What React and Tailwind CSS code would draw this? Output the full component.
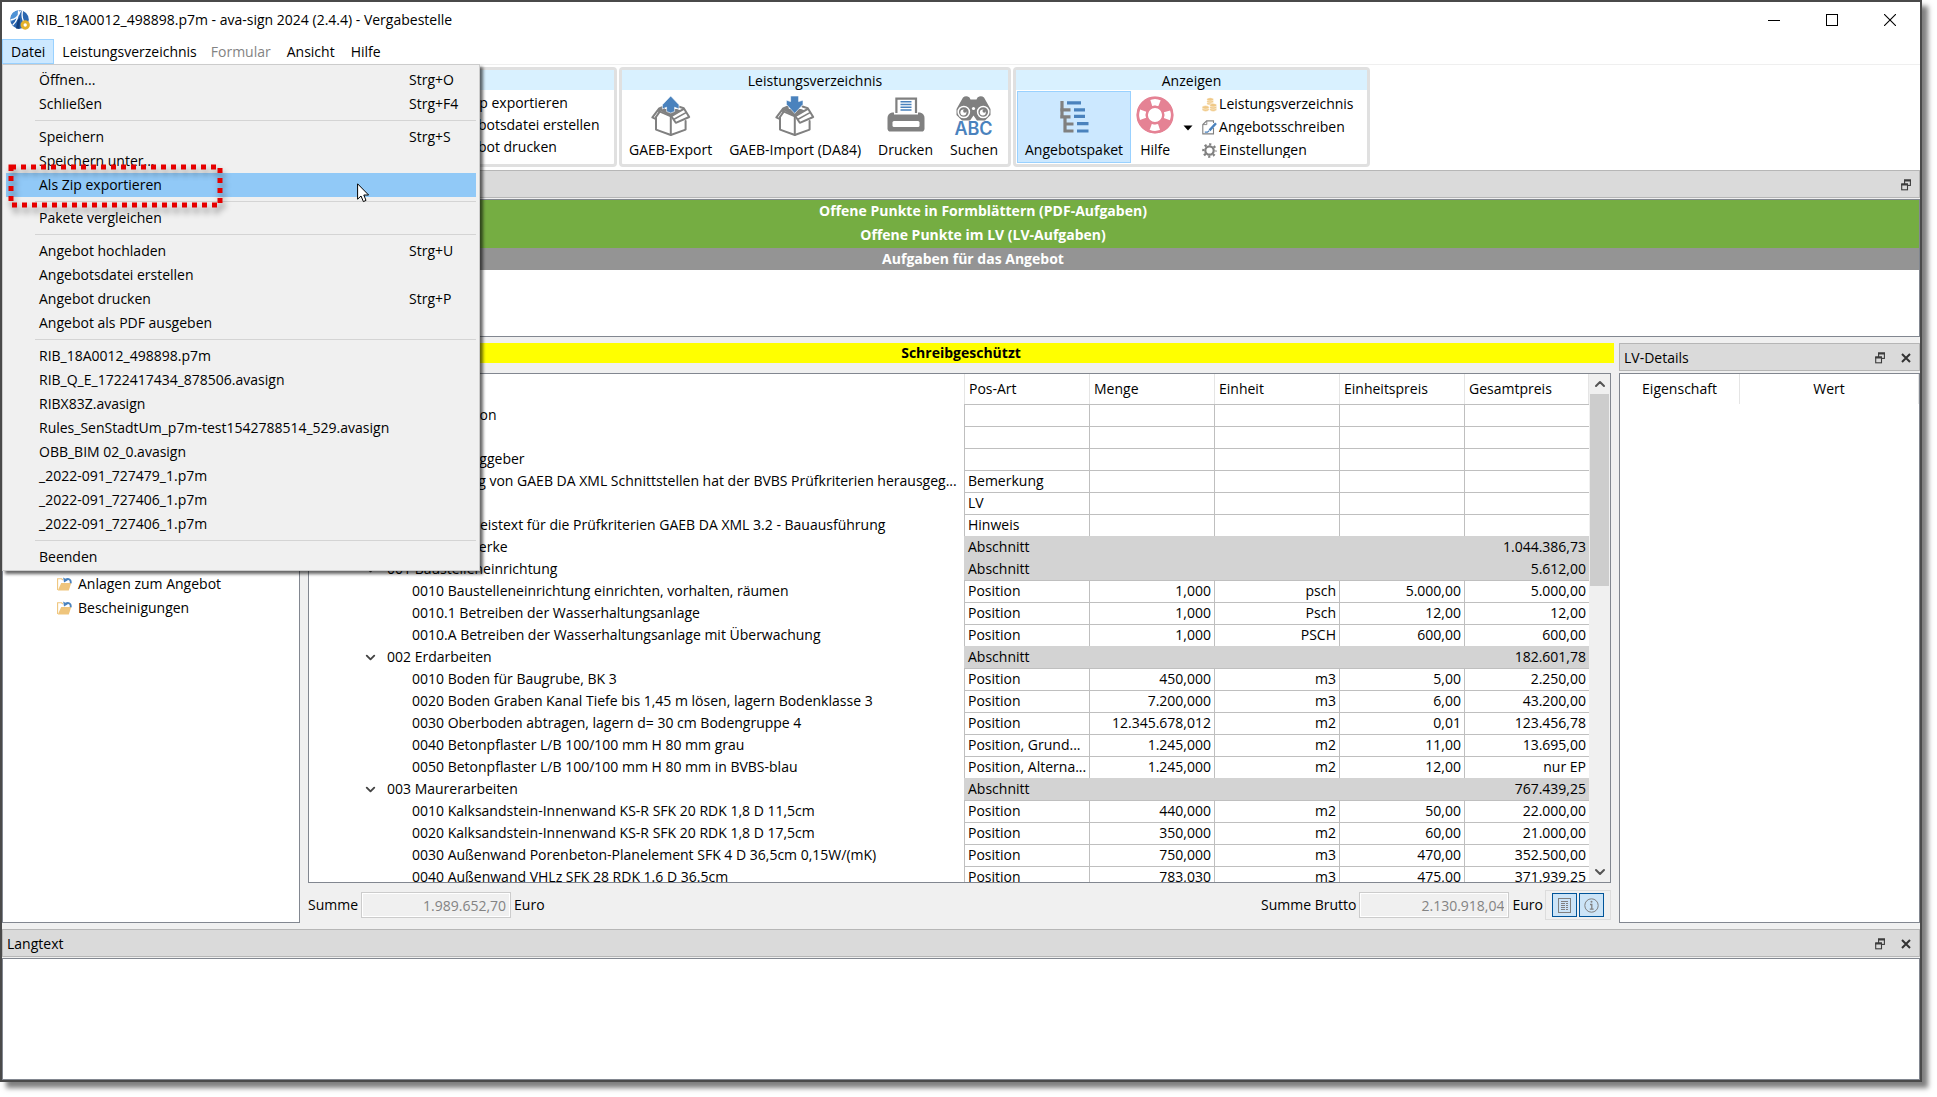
import React from "react";
import clsx from "clsx";
import { ChevronDown, ChevronUp } from "lucide-react";

const menuGroups = [
  [
    { label: "Öffnen...", shortcut: "Strg+O" },
    { label: "Schließen", shortcut: "Strg+F4" },
  ],
  [
    { label: "Speichern", shortcut: "Strg+S" },
    { label: "Speichern unter..." },
    { label: "Als Zip exportieren", active: true },
  ],
  [{ label: "Pakete vergleichen" }],
  [
    { label: "Angebot hochladen", shortcut: "Strg+U" },
    { label: "Angebotsdatei erstellen" },
    { label: "Angebot drucken", shortcut: "Strg+P" },
    { label: "Angebot als PDF ausgeben" },
  ],
  [
    { label: "RIB_18A0012_498898.p7m" },
    { label: "RIB_Q_E_1722417434_878506.avasign" },
    { label: "RIBX83Z.avasign" },
    { label: "Rules_SenStadtUm_p7m-test1542788514_529.avasign" },
    { label: "OBB_BIM 02_0.avasign" },
    { label: "_2022-091_727479_1.p7m" },
    { label: "_2022-091_727406_1.p7m" },
    { label: "_2022-091_727406_1.p7m" },
  ],
  [{ label: "Beenden" }],
];

const INDENT = {
  root: "pl-8",
  info: "pl-16",
  remark: "pl-[90px]",
  note: "pl-[118px]",
  lot: "pl-[60px]",
  section: "pl-[78px]",
  item: "pl-[103px]",
};

const rows = [
  { level: "info", name: "Projektinformation" },
  { level: "root", name: "Projekt" },
  { level: "root", name: "Informationen Auftraggeber" },
  {
    level: "remark",
    name: "Zertifizierung von GAEB DA XML Schnittstellen hat der BVBS Prüfkriterien herausgeg...",
    type: "Bemerkung",
  },
  { level: "root", name: "LV", type: "LV" },
  {
    level: "note",
    name: "01 Hinweistext für die Prüfkriterien GAEB DA XML 3.2 - Bauausführung",
    type: "Hinweis",
  },
  { level: "lot", name: "01 Bauhauptgewerke", type: "Abschnitt", total: "1.044.386,73", open: true },
  { level: "section", name: "001 Baustelleneinrichtung", type: "Abschnitt", total: "5.612,00", open: true },
  { level: "item", name: "0010 Baustelleneinrichtung einrichten, vorhalten, räumen", type: "Position", qty: "1,000", unit: "psch", price: "5.000,00", total: "5.000,00" },
  { level: "item", name: "0010.1 Betreiben der Wasserhaltungsanlage", type: "Position", qty: "1,000", unit: "Psch", price: "12,00", total: "12,00" },
  { level: "item", name: "0010.A Betreiben der Wasserhaltungsanlage mit Überwachung", type: "Position", qty: "1,000", unit: "PSCH", price: "600,00", total: "600,00" },
  { level: "section", name: "002 Erdarbeiten", type: "Abschnitt", total: "182.601,78", open: true },
  { level: "item", name: "0010 Boden für Baugrube, BK 3", type: "Position", qty: "450,000", unit: "m3", price: "5,00", total: "2.250,00" },
  { level: "item", name: "0020 Boden Graben Kanal Tiefe bis 1,45 m lösen, lagern Bodenklasse 3", type: "Position", qty: "7.200,000", unit: "m3", price: "6,00", total: "43.200,00" },
  { level: "item", name: "0030 Oberboden abtragen, lagern d= 30 cm Bodengruppe 4", type: "Position", qty: "12.345.678,012", unit: "m2", price: "0,01", total: "123.456,78" },
  { level: "item", name: "0040 Betonpflaster L/B 100/100 mm H 80 mm grau", type: "Position, Grund...", qty: "1.245,000", unit: "m2", price: "11,00", total: "13.695,00" },
  { level: "item", name: "0050 Betonpflaster L/B 100/100 mm H 80 mm in BVBS-blau", type: "Position, Alterna...", qty: "1.245,000", unit: "m2", price: "12,00", total: "nur EP" },
  { level: "section", name: "003 Maurerarbeiten", type: "Abschnitt", total: "767.439,25", open: true },
  { level: "item", name: "0010 Kalksandstein-Innenwand KS-R SFK 20 RDK 1,8 D 11,5cm", type: "Position", qty: "440,000", unit: "m2", price: "50,00", total: "22.000,00" },
  { level: "item", name: "0020 Kalksandstein-Innenwand KS-R SFK 20 RDK 1,8 D 17,5cm", type: "Position", qty: "350,000", unit: "m2", price: "60,00", total: "21.000,00" },
  { level: "item", name: "0030 Außenwand Porenbeton-Planelement SFK 4 D 36,5cm 0,15W/(mK)", type: "Position", qty: "750,000", unit: "m3", price: "470,00", total: "352.500,00" },
  { level: "item", name: "0040 Außenwand VHLz SFK 28 RDK 1.6 D 36.5cm", type: "Position", qty: "783,030", unit: "m3", price: "475,00", total: "371.939,25" },
];

/* ---------- Icons ---------- */

function AppLogo() {
  return (
    <svg width="20" height="20" viewBox="0 0 20 20" aria-hidden="true">
      <circle cx="9.5" cy="9.5" r="9.3" fill="#2a66b0" />
      <path d="M1 6 Q3 1 8 0.5 L7 8 L1 12 Z" fill="#4f93d6" />
      <path d="M8.6 0.4 C8.6 6 7.5 10.5 2.8 15 M12.4 0.6 C11.6 6 12 10 15 13.5 M0.4 10 C5 9.5 8.6 6.5 10.4 1" stroke="#fff" strokeWidth="1.3" fill="none" />
      <path d="M7.6 10 L10 8 L9.5 19 L6 18.4 Z" fill="#123f7d" />
      <circle cx="15.2" cy="15" r="3.2" fill="#fff" stroke="#e3b12b" strokeWidth="3" />
    </svg>
  );
}

function BoxIcon({ direction }) {
  return (
    <svg width="40" height="42" viewBox="0 0 40 42" aria-hidden="true">
      <path d="M8.7 14.5 L9.5 11.5 L13 10 L14 13 L26 13 L30 14.6 L20 20.4 Z" fill="#808080" />
      <g fill="none" stroke="#808080" strokeWidth="2" strokeLinejoin="round" strokeLinecap="round">
        <path d="M13 10.5 L8.2 12.4 L1.4 21.4 L5 23.2" />
        <path d="M8.2 13 V16.4 L5 21" />
        <path d="M8.4 15.4 L20 20.4" />
        <path d="M5 21.5 V33.6 L19.8 39 L34.6 33.6 V25" />
        <path d="M19.8 20.4 V39" />
        <path d="M27.5 10.5 L32.8 12.2 L38.2 21 L24.8 26.8 L20.4 20.2 L32.8 12.8" fill="#fff" />
        <path d="M23 23.2 L35 16.6" strokeWidth="1.6" />
      </g>
      {direction === "up" ? (
        <path d="M19.7 0 L28 8.8 V13 L23.6 11.2 V15.5 L19.7 17 L15.6 15.5 V11.2 L11.4 13 V8.8 Z" fill="#4a82bd" stroke="#fff" strokeWidth="0.6" />
      ) : (
        <path d="M15.6 0 H23.6 V5.6 L28 4.2 V8.4 L19.7 17.4 L11.4 8.4 V4.2 L15.6 5.6 Z" fill="#4a82bd" stroke="#fff" strokeWidth="0.6" />
      )}
    </svg>
  );
}

function PrinterIcon() {
  return (
    <svg width="38" height="42" viewBox="0 0 38 42" aria-hidden="true">
      <path d="M5 16.5 H33 Q37.5 17.5 37.5 22 V32.5 Q37.5 35.6 34.5 35.6 H3.5 Q0.5 35.6 0.5 32.5 V22 Q0.5 17.5 5 16.5 Z" fill="#808080" />
      <rect x="7" y="14.5" width="24" height="4" fill="#fff" />
      <path d="M9.4 17 V2.6 H29 V17" fill="#fff" stroke="#808080" strokeWidth="2.2" />
      <path d="M13.5 5.8 H24.5 M13.5 8.5 H24.5 M13.5 11.2 H24.5 M13.5 13.9 H24.5" stroke="#4a82bd" strokeWidth="1.5" />
      <rect x="5.5" y="25" width="27" height="6" rx="1.5" fill="#fff" />
    </svg>
  );
}

function SearchAbcIcon() {
  return (
    <svg width="40" height="42" viewBox="0 0 40 42" aria-hidden="true">
      <path d="M9 1.5 Q12 -0.8 15.5 1.5 L16.5 3.4 H22.5 L23.5 1.5 Q27 -0.8 30 1.5 L36.5 13 V19 L31 24.4 H23 L19.5 19.5 L16 24.4 H8 L2.5 19 V13 Z" fill="#808080" />
      <circle cx="9.8" cy="16" r="5.6" fill="#808080" stroke="#fff" strokeWidth="1.5" />
      <circle cx="29.2" cy="16" r="5.6" fill="#808080" stroke="#fff" strokeWidth="1.5" />
      <circle cx="9.4" cy="16.4" r="3" fill="#fff" />
      <circle cx="28.8" cy="16.4" r="3" fill="#fff" />
      <circle cx="10.8" cy="15" r="1.7" fill="#808080" />
      <circle cx="30.2" cy="15" r="1.7" fill="#808080" />
      <circle cx="19.5" cy="12.5" r="1.6" fill="#fff" />
      <text x="19.5" y="38.8" textAnchor="middle" fontFamily="Inter, sans-serif" fontWeight="600" fontSize="18" fill="#4a82bd">
        ABC
      </text>
    </svg>
  );
}

function TreeIcon() {
  return (
    <svg width="30" height="42" viewBox="0 0 30 42" aria-hidden="true">
      <path d="M3 5 V22 M1.2 13.8 H11.5 M1.2 20.8 H11.5 M6 20.8 V36 M4.5 28 H14.5 M4.5 35 H14.5" stroke="#808080" strokeWidth="3.2" fill="none" />
      <path d="M8 6.8 H22 M15 13.8 H26 M15 20.4 H26 M18 27.6 H29.5 M18 35 H29.5" stroke="#4a82bd" strokeWidth="3.2" />
    </svg>
  );
}

function LifebuoyIcon() {
  return (
    <svg width="38" height="42" viewBox="0 0 38 42" aria-hidden="true">
      <circle cx="19" cy="19" r="12.8" fill="none" stroke="#e58294" strokeWidth="11.4" />
      <circle cx="19" cy="19" r="12.6" fill="none" stroke="#fff" strokeWidth="6.6" strokeDasharray="8.4 11.39" strokeDashoffset="4.2" />
      <circle cx="19" cy="19" r="17.2" fill="none" stroke="#e58294" strokeWidth="2.2" />
      <circle cx="19" cy="19" r="8.4" fill="none" stroke="#e58294" strokeWidth="2" />
    </svg>
  );
}

function CoinsIcon() {
  return (
    <svg width="15" height="15" viewBox="0 0 15 15" aria-hidden="true">
      <g fill="#f0c987" stroke="#fff" strokeWidth="0.5">
        <ellipse cx="8.2" cy="6.4" rx="3.4" ry="1.7" />
        <ellipse cx="8.2" cy="4.4" rx="3.4" ry="1.7" />
        <ellipse cx="8.2" cy="2.4" rx="3.4" ry="1.7" />
        <ellipse cx="3.6" cy="12.6" rx="3.5" ry="1.8" />
        <ellipse cx="3.6" cy="10.4" rx="3.5" ry="1.8" />
        <ellipse cx="11.2" cy="12.6" rx="3.5" ry="1.8" />
        <ellipse cx="11.2" cy="10.4" rx="3.5" ry="1.8" />
        <ellipse cx="11.2" cy="8.2" rx="3.5" ry="1.8" />
      </g>
    </svg>
  );
}

function LetterIcon() {
  return (
    <svg width="15" height="15" viewBox="0 0 15 15" aria-hidden="true">
      <path d="M11.5 8 V13.9 H0.8 V4.6 L4.6 0.9 H11.5 V3" fill="none" stroke="#808080" strokeWidth="1.1" />
      <path d="M4.8 1 V4.6 H1" fill="none" stroke="#808080" strokeWidth="0.9" />
      <path d="M14 3.2 L7.5 10.4" stroke="#4a82bd" strokeWidth="2.4" />
      <path d="M2.8 12.2 H5.5 L7.2 10.6" stroke="#4a82bd" strokeWidth="1.3" fill="none" />
    </svg>
  );
}

function GearIcon() {
  return (
    <svg width="15" height="15" viewBox="0 0 15 15" aria-hidden="true">
      <circle cx="7.5" cy="7.5" r="6.2" fill="none" stroke="#808080" strokeWidth="2.2" strokeDasharray="2.2 2.67" strokeDashoffset="1.1" />
      <circle cx="7.5" cy="7.5" r="4.2" fill="none" stroke="#808080" strokeWidth="2.2" />
    </svg>
  );
}

function FolderIcon() {
  return (
    <svg width="15" height="14" viewBox="0 0 15 14" aria-hidden="true">
      <path d="M0.6 13 V1.8 H4.6 L5.8 3" fill="none" stroke="#efc57c" strokeWidth="1.1" />
      <path d="M4.2 6 H14.2 L11.8 13.4 H0.8 Z" fill="#efc57c" />
      <path d="M13.6 6.2 C14.4 2.6 11.6 1 8.2 2.8" fill="none" stroke="#4a82bd" strokeWidth="1.9" />
      <path d="M6.2 0.6 L7 5.4 L10.8 3.2 Z" fill="#4a82bd" />
    </svg>
  );
}

function RestoreIcon() {
  return (
    <svg width="10" height="12" viewBox="0 0 10 12" aria-hidden="true">
      <rect x="3.6" y="1.4" width="5.8" height="5" fill="none" stroke="#3c3c3c" strokeWidth="1.1" />
      <path d="M3 1.4 H10" stroke="#3c3c3c" strokeWidth="2.2" />
      <rect x="0.7" y="5.4" width="5.8" height="5.4" fill="#dadada" stroke="#3c3c3c" strokeWidth="1.1" />
      <path d="M0.2 5.4 H7" stroke="#3c3c3c" strokeWidth="2.2" />
    </svg>
  );
}

function CloseIcon() {
  return (
    <svg width="10" height="10" viewBox="0 0 10 10" aria-hidden="true">
      <path d="M1 1 L9 9 M9 1 L1 9" stroke="#333" strokeWidth="2" />
    </svg>
  );
}

/* ---------- Building blocks ---------- */

function DockTitle({ title, closable }) {
  return (
    <div className="flex h-7 shrink-0 items-center border border-[#b6b6b6] bg-[#dadada] pt-px pr-2 pl-1">
      <h2 className="flex-1">{title}</h2>
      <div className="flex items-center gap-4">
        <button type="button" aria-label="Abdocken">
          <RestoreIcon />
        </button>
        {closable && (
          <button type="button" aria-label="Schließen">
            <CloseIcon />
          </button>
        )}
      </div>
    </div>
  );
}

function RibbonGroup({ title, className, children }) {
  return (
    <section className={clsx("flex flex-col rounded-sm border-3 border-[#e0e0e0] bg-white", className)}>
      <h2 className="h-5 bg-[#d9f1ff] text-center leading-[22px]">{title}</h2>
      <div className="flex flex-1">{children}</div>
    </section>
  );
}

function RibbonButton({ icon, label }) {
  return (
    <button type="button" className="flex shrink-0 flex-col items-center pt-[6px] pr-[10px] pl-[7px] whitespace-nowrap">
      {icon}
      <span className="leading-6">{label}</span>
    </button>
  );
}

function SmallRibbonButton({ icon, label }) {
  return (
    <button type="button" className="flex h-4 items-center gap-[2px] overflow-hidden whitespace-nowrap">
      {icon}
      <span className="leading-4">{label}</span>
    </button>
  );
}

function FileMenu() {
  return (
    <div role="menu" className="absolute top-full left-0 z-20 w-[478px] border border-[#ccc] bg-[#f0f0f0] px-[3px] pt-[3px] pb-px shadow-[3px_3px_3px_rgba(0,0,0,0.6)]">
      {menuGroups.map((group, i) => (
        <React.Fragment key={i}>
          {i > 0 && <hr className="my-1 ml-[29px] border-t border-[#d4d4d4]" />}
          {group.map((item, j) => (
            <button
              key={j}
              type="button"
              role="menuitem"
              className={clsx("flex h-6 w-full items-center pl-[33px] text-left", item.active && "bg-[#91c9f7]")}
            >
              <span className="flex-1">{item.label}</span>
              {item.shortcut && <span className="w-[67px]">{item.shortcut}</span>}
            </button>
          ))}
        </React.Fragment>
      ))}

      {/* dotted marker around the export entry */}
      <svg className="absolute top-[99px] left-[5px] drop-shadow-[2px_5px_3px_rgba(0,0,0,0.45)]" width="216" height="44" aria-hidden="true">
        <rect x="3" y="3" width="209" height="38" fill="none" stroke="#e60000" strokeWidth="5" strokeDasharray="5 5" />
      </svg>
      <svg className="absolute top-[118px] left-[354px]" width="13" height="20" viewBox="0 0 13 20" aria-hidden="true">
        <path d="M0.6 0.8 V16.2 L4 13 L6.4 18.6 L9 17.4 L6.8 12 H11.6 Z" fill="#fff" stroke="#000" strokeWidth="1" />
      </svg>
    </div>
  );
}

function MenuBar() {
  return (
    <nav className="relative flex h-[25px] shrink-0">
      <button type="button" className="border border-[#99d1ff] bg-[#cce8ff] px-2">Datei</button>
      <button type="button" className="pr-[6px] pl-2">Leistungsverzeichnis</button>
      <button type="button" className="px-2 text-[#838383]">Formular</button>
      <button type="button" className="px-2">Ansicht</button>
      <button type="button" className="px-2">Hilfe</button>
      <FileMenu />
    </nav>
  );
}

function Ribbon() {
  return (
    <div className="flex h-[106px] shrink-0 gap-[2px] border-t border-[#efefef] px-[2px] pt-[2px] pb-[3px]">
      <RibbonGroup title="Angebot" className="w-[613px]">
        <div className="flex flex-col pt-[2px] pl-[438px]">
          <button type="button" className="h-[22px] text-left whitespace-nowrap">Als Zip exportieren</button>
          <button type="button" className="h-[22px] text-left whitespace-nowrap">Angebotsdatei erstellen</button>
          <button type="button" className="h-[22px] text-left whitespace-nowrap">Angebot drucken</button>
        </div>
      </RibbonGroup>

      <RibbonGroup title="Leistungsverzeichnis" className="w-[392px]">
        <RibbonButton icon={<BoxIcon direction="up" />} label="GAEB-Export" />
        <RibbonButton icon={<BoxIcon direction="down" />} label="GAEB-Import (DA84)" />
        <RibbonButton icon={<PrinterIcon />} label="Drucken" />
        <RibbonButton icon={<SearchAbcIcon />} label="Suchen" />
      </RibbonGroup>

      <RibbonGroup title="Anzeigen" className="w-[357px]">
        <button type="button" className="m-px mb-[2px] flex flex-col items-center border border-[#99d1ff] bg-[#cce8ff] px-[7px] pt-1">
          <TreeIcon />
          <span className="leading-6">Angebotspaket</span>
        </button>
        <button type="button" className="flex flex-col items-center px-1 pt-[6px]">
          <LifebuoyIcon />
          <span className="leading-6">Hilfe</span>
        </button>
        <button type="button" aria-label="Hilfe-Optionen" className="px-[5px]">
          <svg width="10" height="6" viewBox="0 0 10 6" aria-hidden="true">
            <path d="M0.5 0.5 H9.5 L5 5.5 Z" fill="#000" />
          </svg>
        </button>
        <div className="flex flex-col gap-[7px] pt-[6px] pl-1">
          <SmallRibbonButton icon={<CoinsIcon />} label="Leistungsverzeichnis" />
          <SmallRibbonButton icon={<LetterIcon />} label="Angebotsschreiben" />
          <SmallRibbonButton icon={<GearIcon />} label="Einstellungen" />
        </div>
      </RibbonGroup>
    </div>
  );
}

function PositionRow({ row }) {
  const isSection = row.type === "Abschnitt";
  const cell = clsx(
    "border-t border-l px-[3px] whitespace-nowrap",
    isSection ? "border-[#d3d3d3] bg-[#d3d3d3]" : "border-[#bfbfbf]"
  );
  const numberCell = clsx(cell, "pb-[2px] text-right");
  return (
    <tr className="h-[22px]">
      <td className={clsx("relative whitespace-nowrap", INDENT[row.level])}>
        {row.open && <ChevronDown size={15} strokeWidth={3} className="absolute top-1 left-[54px] text-[#444]" />}
        {row.name}
      </td>
      <td className={clsx(cell, "pb-px")}>{row.type}</td>
      <td className={numberCell}>{row.qty}</td>
      <td className={numberCell}>{row.unit}</td>
      <td className={numberCell}>{row.price}</td>
      <td className={numberCell}>{row.total}</td>
    </tr>
  );
}

function PositionTable() {
  return (
    <div className="mt-[10px] mr-[3px] flex min-h-0 flex-1 overflow-hidden border border-[#828790] bg-white">
      <div className="min-w-0 flex-1 overflow-hidden">
        <table className="w-full table-fixed border-separate border-spacing-0 leading-[18px]">
          <colgroup>
            <col />
            <col className="w-[125px]" />
            <col className="w-[125px]" />
            <col className="w-[125px]" />
            <col className="w-[125px]" />
            <col className="w-[125px]" />
          </colgroup>
          <thead>
            <tr className="h-[30px] text-left">
              <th aria-label="Bezeichnung" />
              <th className="border-l border-[#e5e5e5] pl-1 font-normal">Pos-Art</th>
              <th className="border-l border-[#e5e5e5] pl-1 font-normal">Menge</th>
              <th className="border-l border-[#e5e5e5] pl-1 font-normal">Einheit</th>
              <th className="border-l border-[#e5e5e5] pl-1 font-normal">Einheitspreis</th>
              <th className="border-x border-[#e5e5e5] pl-1 font-normal">Gesamtpreis</th>
            </tr>
          </thead>
          <tbody>
            {rows.map((row, i) => (
              <PositionRow key={i} row={row} />
            ))}
          </tbody>
        </table>
      </div>
      <div className="flex w-[21px] shrink-0 flex-col items-center bg-[#f0f0f0] px-px">
        <ChevronUp size={16} strokeWidth={3} className="my-[2px] text-[#555]" />
        <div className="h-48 w-full bg-[#cdcdcd]" />
        <ChevronDown size={16} strokeWidth={3} className="mt-auto mb-[2px] text-[#555]" />
      </div>
    </div>
  );
}

function SumField({ id, label, value }) {
  return (
    <div className="flex items-center gap-[3px]">
      <label htmlFor={id}>{label}</label>
      <input
        id={id}
        disabled
        defaultValue={value}
        className="h-[26px] w-[150px] border border-[#ccc] bg-[#f0f0f0] px-1 text-right text-[#838383] shadow-[inset_0_0_0_1px_#fff]"
      />
      <span>Euro</span>
    </div>
  );
}

function SumBar() {
  return (
    <div className="mr-[3px] flex h-10 shrink-0 items-center pt-1">
      <SumField id="summe" label="Summe" value="1.989.652,70" />
      <div className="ml-auto">
        <SumField id="summe-brutto" label="Summe Brutto" value="2.130.918,04" />
      </div>
      <div className="ml-[2px] flex gap-[2px] border border-[#dcdcdc] px-[6px] py-[2px]">
        <button type="button" aria-label="Kurztext" className="flex h-6 w-[25px] items-center justify-center border border-[#005499] bg-[#cce4f7]">
          <svg width="13" height="15" viewBox="0 0 13 15" aria-hidden="true">
            <rect x="0.5" y="0.5" width="12" height="14" fill="none" stroke="#808080" />
            <path d="M3 3.5 H10 M3 5.5 H7 M8 5.5 H10 M3 7.5 H7 M8 7.5 H10 M3 9.5 H7 M8 9.5 H10 M3 11.5 H7 M8 11.5 H10" stroke="#808080" />
          </svg>
        </button>
        <button type="button" aria-label="Information" className="flex h-6 w-[25px] items-center justify-center border border-[#005499] bg-[#cce4f7]">
          <svg width="15" height="15" viewBox="0 0 15 15" aria-hidden="true">
            <circle cx="7.5" cy="7.5" r="6.7" fill="none" stroke="#808080" />
            <path d="M6 6.5 H7.8 V11 M5.8 11.2 H9.6" fill="none" stroke="#808080" strokeWidth="1.3" />
            <circle cx="7.5" cy="3.8" r="1" fill="#808080" />
          </svg>
        </button>
      </div>
    </div>
  );
}

export default function App() {
  return (
    <div className="flex h-screen flex-col bg-white pr-[15px] pb-[15px] font-['Open_Sans','Noto_Sans',sans-serif] text-sm text-black">
      <div className="flex min-h-0 flex-1 flex-col border-2 border-[#4a4a4a] bg-[#f0f0f0] shadow-[6px_6px_5px_rgba(0,0,0,0.5)]">
        <div className="flex shrink-0 flex-col bg-white">
          <header className="flex h-[37px] items-center gap-[6px] pb-px pl-2">
            <AppLogo />
            <h1 className="flex-1">RIB_18A0012_498898.p7m - ava-sign 2024 (2.4.4) - Vergabestelle</h1>
            <div className="flex items-center gap-[46px] pr-6">
              <button type="button" aria-label="Minimieren">
                <svg width="12" height="12" viewBox="0 0 12 12"><path d="M0 6.5 H12" stroke="#000" /></svg>
              </button>
              <button type="button" aria-label="Maximieren">
                <svg width="12" height="12" viewBox="0 0 12 12"><rect x="0.5" y="0.5" width="11" height="11" fill="none" stroke="#000" /></svg>
              </button>
              <button type="button" aria-label="Fenster schließen">
                <svg width="12" height="12" viewBox="0 0 12 12"><path d="M0 0 L12 12 M12 0 L0 12" stroke="#000" strokeWidth="1.1" /></svg>
              </button>
            </div>
          </header>
          <MenuBar />
          <Ribbon />
        </div>

        <DockTitle title="" />
        <section className="mt-px h-[138px] shrink-0 border border-[#828790] bg-white text-center font-bold text-white">
          <p className="h-6 bg-[#75ad42] pl-11 leading-[22px]">Offene Punkte in Formblättern (PDF-Aufgaben)</p>
          <p className="h-6 bg-[#75ad42] pl-11 leading-[22px]">Offene Punkte im LV (LV-Aufgaben)</p>
          <p className="h-[22px] bg-[#949494] pl-6 leading-[22px]">Aufgaben für das Angebot</p>
        </section>

        <div className="flex min-h-0 flex-1 pt-[6px] pb-[6px]">
          <aside className="w-[298px] shrink-0 border border-[#828790] bg-white pt-[228px] pl-[54px]">
            <a href="#anlagen" className="flex h-6 items-center gap-[6px]">
              <FolderIcon />
              Anlagen zum Angebot
            </a>
            <a href="#bescheinigungen" className="flex h-6 items-center gap-[6px]">
              <FolderIcon />
              Bescheinigungen
            </a>
          </aside>

          <main className="ml-2 flex min-w-0 flex-1 flex-col">
            <p className="h-5 shrink-0 bg-[#ff0] text-center leading-5 font-bold">Schreibgeschützt</p>
            <PositionTable />
            <SumBar />
          </main>

          <section className="ml-[5px] flex w-[301px] shrink-0 flex-col">
            <DockTitle title="LV-Details" closable />
            <div className="mt-[2px] flex-1 border border-[#828790] bg-white">
              <table className="w-full table-fixed border-separate border-spacing-0">
                <thead>
                  <tr className="h-[30px]">
                    <th className="w-[120px] border-r border-[#e5e5e5] font-normal">Eigenschaft</th>
                    <th className="border-r border-[#e5e5e5] font-normal">Wert</th>
                  </tr>
                </thead>
              </table>
            </div>
          </section>
        </div>

        <DockTitle title="Langtext" closable />
        <div className="mt-px h-[122px] shrink-0 border border-[#828790] bg-white" />
      </div>
    </div>
  );
}
